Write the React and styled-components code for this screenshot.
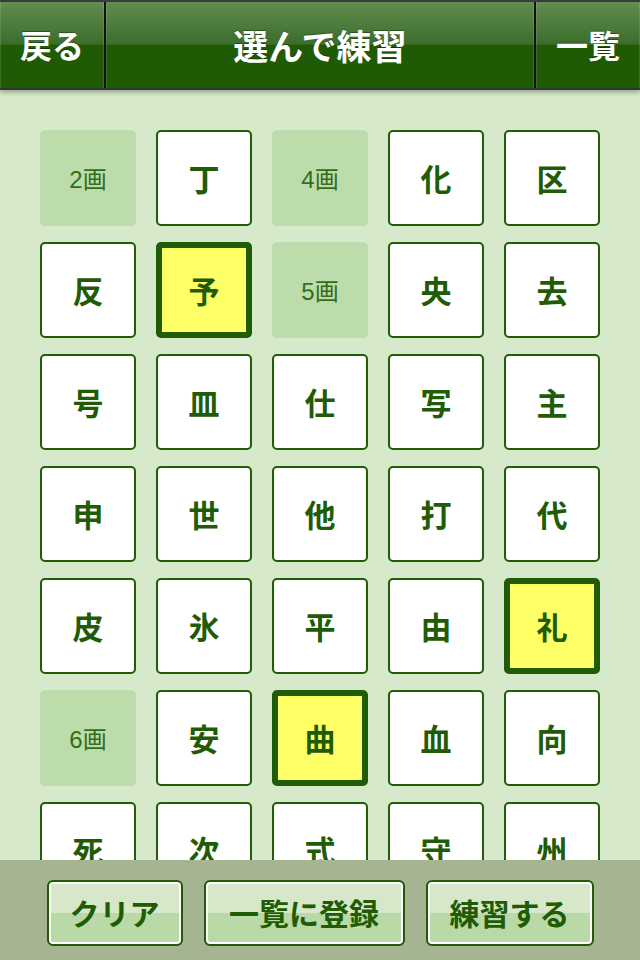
import React from 'react'
import styled, { createGlobalStyle } from 'styled-components'

const GlobalStyle = createGlobalStyle`
  html, body {
    margin: 0;
    padding: 0;
  }
  body {
    font-family: "Liberation Sans", "Noto Sans CJK JP", sans-serif;
    background: #d6e9cb;
  }
`

const Screen = styled.div`
  display: flex;
  flex-direction: column;
  width: 640px;
  height: 960px;
  overflow: hidden;
  background: #d6e9cb;
`

const Header = styled.header`
  position: relative;
  z-index: 2;
  display: flex;
  height: 86px;
  flex-shrink: 0;
  border-top: 2px solid #3b3b3b;
  border-bottom: 2px solid #333;
  background: #111;
  gap: 2px;
  box-shadow: 0 2px 5px rgba(60, 70, 50, 0.45);
`

const HeaderCell = styled.div`
  display: flex;
  align-items: center;
  justify-content: center;
  width: ${props => props.wide ? 'auto' : '104px'};
  flex: ${props => props.wide ? 1 : 'none'};
  background: linear-gradient(to bottom, #5f8e50 0%, #3d6d2b 49%, #1f5b05 50%, #1f5b05 100%);
  box-shadow: inset 1px 0 0 rgba(255, 255, 255, 0.12), inset -1px 0 0 rgba(255, 255, 255, 0.12);
  color: #fff;
  font-family: "Noto Sans CJK JP", sans-serif;
  font-weight: 700;
  font-size: ${props => props.wide ? '35px' : '32px'};
  padding-bottom: 2px;
  text-shadow: 0 -1px 0 rgba(0, 0, 0, 0.35);
`

const Body = styled.main`
  flex: 1;
  overflow: hidden;
  padding: 40px 40px 0;
`

const Grid = styled.div`
  display: grid;
  grid-template-columns: repeat(5, 96px);
  grid-auto-rows: 96px;
  column-gap: 20px;
  row-gap: 16px;
`

const Cell = styled.div`
  box-sizing: border-box;
  display: flex;
  align-items: center;
  justify-content: center;
  border-radius: 5px;
  border: ${props => props.selected ? '6px' : '2px'} solid #1f5c05;
  background: ${props => props.selected ? '#ffff66' : '#fff'};
  color: #1f5c05;
  font-family: "Noto Sans CJK JP", sans-serif;
  font-weight: 700;
  font-size: 31px;
  padding-bottom: 2px;
`

const Label = styled.div`
  display: flex;
  align-items: center;
  justify-content: center;
  border-radius: 5px;
  background: #bddcab;
  color: #336e1a;
  font-family: "Liberation Sans", "Noto Sans CJK JP", sans-serif;
  font-size: 24px;
  padding-bottom: 2px;
`

const Footer = styled.footer`
  display: flex;
  justify-content: center;
  gap: 21px;
  height: 100px;
  flex-shrink: 0;
  box-sizing: border-box;
  padding-top: 20px;
  background: #a5b591;
`

const FooterButton = styled.button`
  box-sizing: border-box;
  width: ${props => props.width}px;
  height: 66px;
  border: 2px solid #1f5c05;
  border-radius: 6px;
  box-shadow: inset 0 0 0 2px #fff;
  background: linear-gradient(to bottom, #d6e8c9 0%, #d6e8c9 50%, #b9d9a6 50%, #b9d9a6 100%);
  color: #1f5c05;
  font-family: "Noto Sans CJK JP", sans-serif;
  font-weight: 700;
  font-size: 30px;
  padding: 0 0 2px;
`

const items = [
  { label: '2画' }, { k: '丁' }, { label: '4画' }, { k: '化' }, { k: '区' },
  { k: '反' }, { k: '予', selected: true }, { label: '5画' }, { k: '央' }, { k: '去' },
  { k: '号' }, { k: '皿' }, { k: '仕' }, { k: '写' }, { k: '主' },
  { k: '申' }, { k: '世' }, { k: '他' }, { k: '打' }, { k: '代' },
  { k: '皮' }, { k: '氷' }, { k: '平' }, { k: '由' }, { k: '礼', selected: true },
  { label: '6画' }, { k: '安' }, { k: '曲', selected: true }, { k: '血' }, { k: '向' },
  { k: '死' }, { k: '次' }, { k: '式' }, { k: '守' }, { k: '州' },
]

export default function App() {
  return (
    <Screen>
      <GlobalStyle />
      <Header>
        <HeaderCell>戻る</HeaderCell>
        <HeaderCell wide>選んで練習</HeaderCell>
        <HeaderCell>一覧</HeaderCell>
      </Header>
      <Body>
        <Grid>
          {items.map((item, i) =>
            item.label
              ? <Label key={i}>{item.label}</Label>
              : <Cell key={i} selected={item.selected}>{item.k}</Cell>
          )}
        </Grid>
      </Body>
      <Footer>
        <FooterButton width={136}>クリア</FooterButton>
        <FooterButton width={201}>一覧に登録</FooterButton>
        <FooterButton width={168}>練習する</FooterButton>
      </Footer>
    </Screen>
  )
}
